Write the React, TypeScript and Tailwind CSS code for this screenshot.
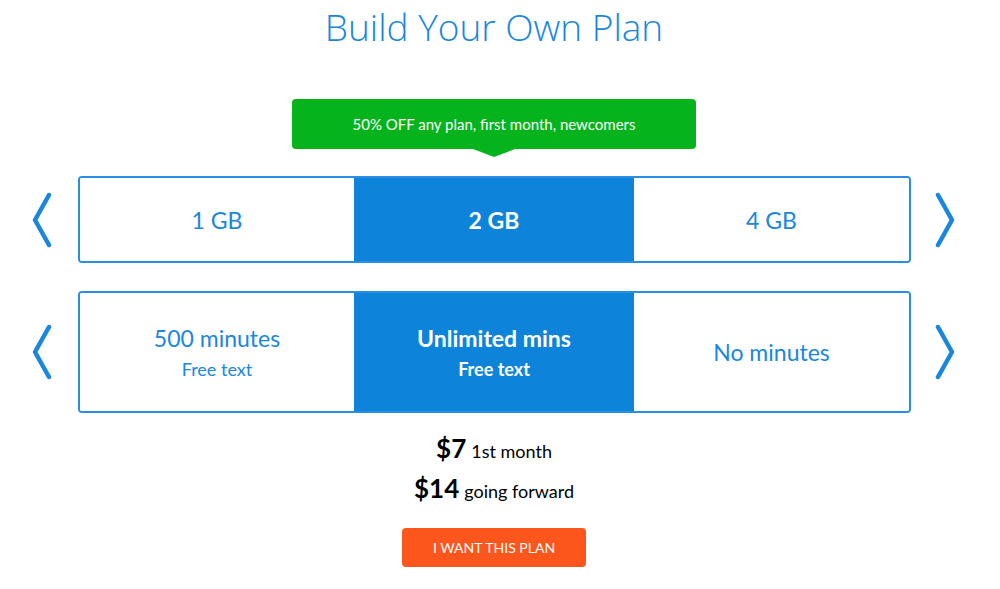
import React from 'react';

const Chevron = ({ dir }: { dir: 'left' | 'right' }) => (
  <svg width="24" height="56" viewBox="0 0 24 56" fill="none" className="text-[#1a87dc]">
    <path
      d={dir === 'left' ? 'M19 3 L5 28 L19 53' : 'M5 3 L19 28 L5 53'}
      stroke="currentColor"
      strokeWidth="4.5"
      strokeLinecap="round"
      strokeLinejoin="round"
    />
  </svg>
);

type Option = { title: string; sub?: string };

const SelectorRow = ({ options, active, height }: { options: Option[]; active: number; height: string }) => (
  <div className="grid grid-cols-[78px_833px_1fr] items-center">
    <div className="flex justify-center pl-[6px]">
      <Chevron dir="left" />
    </div>
    <div className={`grid grid-cols-[274px_280px_1fr] rounded border-2 border-[#2a8fe0] overflow-hidden ${height}`}>
      {options.map((o, i) => (
        <div
          key={o.title}
          className={`flex flex-col items-center justify-center ${
            i === active ? 'bg-[#0d84d9] text-white font-bold' : 'bg-white text-[#1a87dc]'
          }`}
        >
          <div className="text-[23px] leading-[28px]">{o.title}</div>
          {o.sub && <div className="text-[18px] leading-[24px] mt-[5px]">{o.sub}</div>}
        </div>
      ))}
    </div>
    <div className="flex justify-center pr-[22px]">
      <Chevron dir="right" />
    </div>
  </div>
);

export default function App() {
  return (
    <div className="w-[1000px] h-[589px] bg-white font-['Lato','Open_Sans',sans-serif]">
      <h1 className="pt-[5px] mr-[12px] text-center text-[37px] leading-[44px] font-light text-[#1a87dc] font-['Open_Sans','Lato',sans-serif]">
        Build Your Own Plan
      </h1>

      <div className="mt-[50px] flex flex-col items-center">
        <div className="ml-[-12px] flex flex-col items-center">
          <div className="w-[404px] h-[50px] rounded bg-[#05b41c] flex items-center justify-center text-white text-[15px]">
            50% OFF any plan, first month, newcomers
          </div>
          <div className="w-0 h-0 border-l-[21px] border-r-[21px] border-t-[8px] border-l-transparent border-r-transparent border-t-[#05b41c]" />
        </div>
      </div>

      <div className="mt-[19px]">
        <SelectorRow
          options={[{ title: '1 GB' }, { title: '2 GB' }, { title: '4 GB' }]}
          active={1}
          height="h-[87px]"
        />
      </div>

      <div className="mt-[28px]">
        <SelectorRow
          options={[
            { title: '500 minutes', sub: 'Free text' },
            { title: 'Unlimited mins', sub: 'Free text' },
            { title: 'No minutes' },
          ]}
          active={1}
          height="h-[122px]"
        />
      </div>

      <div className="mt-[16px] ml-[-12px] flex flex-col items-center text-black">
        <div className="flex items-baseline gap-[5px] h-[40px]">
          <span className="text-[26px] font-bold">$7</span>
          <span className="text-[18px]">1st month</span>
        </div>
        <div className="flex items-baseline gap-[5px] h-[40px]">
          <span className="text-[26px] font-bold">$14</span>
          <span className="text-[18px]">going forward</span>
        </div>
        <button className="mt-[19px] w-[184px] h-[39px] rounded bg-[#fc561d] text-white text-[14px]">
          I WANT THIS PLAN
        </button>
      </div>
    </div>
  );
}
